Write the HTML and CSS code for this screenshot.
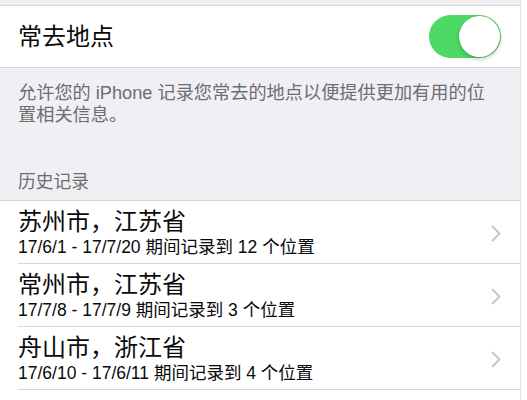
FILE: index.html
```html
<!DOCTYPE html>
<html lang="zh-CN">
<head>
<meta charset="utf-8">
<title>常去地点</title>
<link rel="stylesheet" href="styles.css">
</head>
<body>
<div class="screen">
  <div class="top-gap"></div>
  <div class="group">
    <div class="cell toggle-cell">
      <span class="cell-title">常去地点</span>
      <span class="switch" role="switch" aria-checked="true"><span class="knob"></span></span>
    </div>
  </div>
  <p class="footer">允许您的 iPhone 记录您常去的地点以便提供更加有用的位<br>置相关信息。</p>
  <div class="section-header">历史记录</div>
  <div class="group list">
    <div class="row">
      <div class="row-text">
        <div class="row-title">苏州市，江苏省</div>
        <div class="row-sub">17/6/1 - 17/7/20 期间记录到 12 个位置</div>
      </div>
      <svg class="chevron" viewBox="0 0 10 17" width="10" height="17"><path d="M1.5 1.5 L8.5 8.5 L1.5 15.5" fill="none" stroke="#c7c7cc" stroke-width="2" stroke-linecap="round" stroke-linejoin="round"/></svg>
    </div>
    <div class="row">
      <div class="row-text">
        <div class="row-title">常州市，江苏省</div>
        <div class="row-sub">17/7/8 - 17/7/9 期间记录到 3 个位置</div>
      </div>
      <svg class="chevron" viewBox="0 0 10 17" width="10" height="17"><path d="M1.5 1.5 L8.5 8.5 L1.5 15.5" fill="none" stroke="#c7c7cc" stroke-width="2" stroke-linecap="round" stroke-linejoin="round"/></svg>
    </div>
    <div class="row">
      <div class="row-text">
        <div class="row-title">舟山市，浙江省</div>
        <div class="row-sub">17/6/10 - 17/6/11 期间记录到 4 个位置</div>
      </div>
      <svg class="chevron" viewBox="0 0 10 17" width="10" height="17"><path d="M1.5 1.5 L8.5 8.5 L1.5 15.5" fill="none" stroke="#c7c7cc" stroke-width="2" stroke-linecap="round" stroke-linejoin="round"/></svg>
    </div>
    <div class="row-more"></div>
  </div>
</div>
</body>
</html>
```

FILE: styles.css
```css
html, body {
  margin: 0;
  padding: 0;
  background: #ffffff;
}

body {
  font-family: "Liberation Sans", "Noto Sans CJK SC", sans-serif;
  color: #0a0a0a;
  overflow: hidden;
}

.screen {
  width: 520px;
  background: #efeff4;
  border-right: 1px solid #e2e2e6;
}

.top-gap {
  height: 5px;
}

.group {
  background: #ffffff;
  border-top: 1px solid #d6d6da;
  border-bottom: 1px solid #d6d6da;
}

.cell {
  display: flex;
  align-items: center;
  justify-content: space-between;
  height: 61px;
  padding: 0 19px 0 18px;
}

.cell-title {
  font-size: 24px;
  line-height: 28px;
}

.switch {
  position: relative;
  display: block;
  width: 72px;
  height: 43px;
  border-radius: 22px;
  background: #4cd964;
}

.knob {
  position: absolute;
  top: 1px;
  right: 1px;
  width: 41px;
  height: 41px;
  border-radius: 50%;
  background: #ffffff;
  box-shadow: 0 2px 4px rgba(0, 0, 0, 0.22), 0 0 0 0.5px rgba(0, 0, 0, 0.08);
}

.footer {
  margin: 0;
  padding: 14px 8px 0 18px;
  font-size: 18.2px;
  line-height: 22px;
  color: #6d6d72;
  white-space: nowrap;
}

.section-header {
  padding: 45px 18px 7px;
  font-size: 17.8px;
  line-height: 22px;
  color: #6d6d72;
}

.list {
  border-bottom: none;
}

.row {
  display: flex;
  align-items: center;
  justify-content: space-between;
  margin-left: 18px;
  padding: 7px 19px 5px 0;
  height: 50px;
  border-bottom: 1px solid #d6d6da;
}

.row-text {
  display: flex;
  flex-direction: column;
}

.row-title {
  font-size: 24px;
  line-height: 28px;
}

.row-sub {
  font-size: 17.5px;
  line-height: 22px;
}

.chevron {
  display: block;
  flex: none;
}

.row-more {
  height: 10px;
}
```
